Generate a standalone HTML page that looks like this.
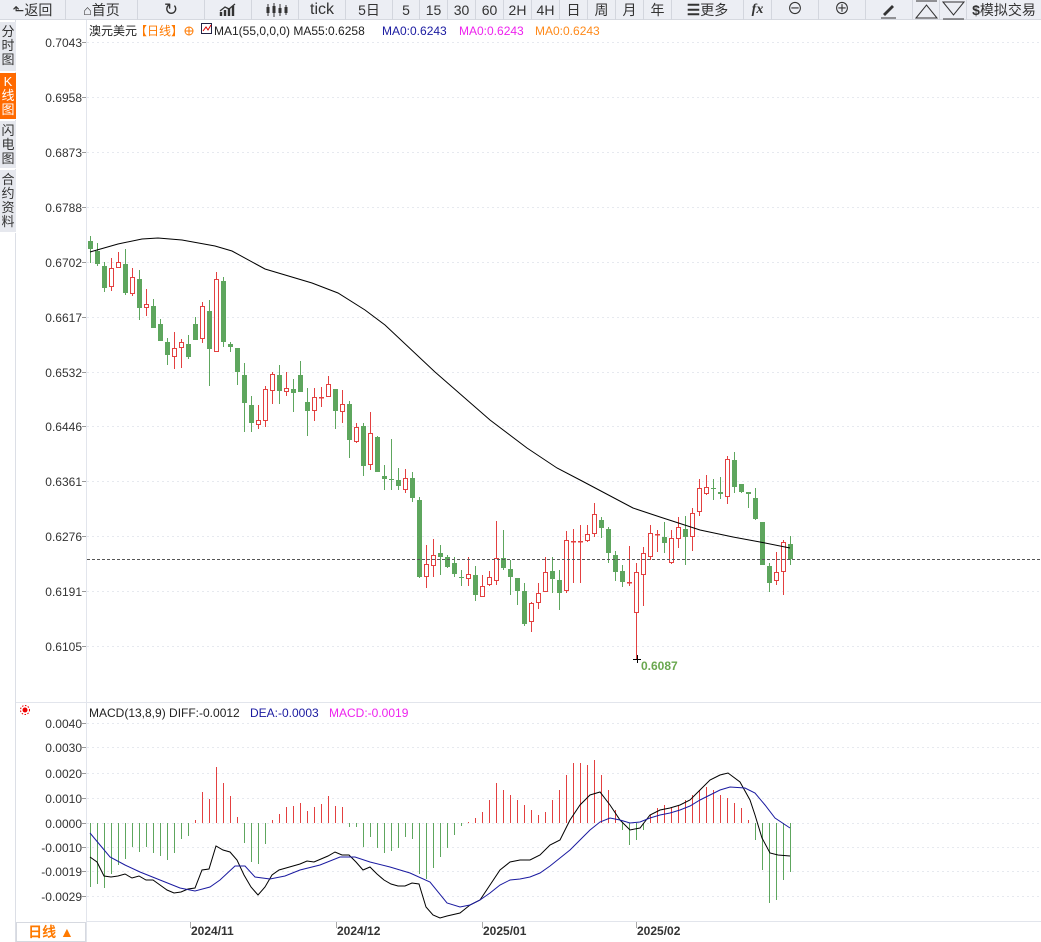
<!DOCTYPE html>
<html><head><meta charset="utf-8"><style>
*{margin:0;padding:0;box-sizing:border-box}
body{width:1041px;height:942px;overflow:hidden;background:#fff;font-family:"Liberation Sans","Noto Sans CJK SC",sans-serif;position:relative}
#tb{position:absolute;left:0;top:0;width:1041px;height:20px;background:#eceef4;border-bottom:1px solid #d6d9e0}
#tb div{position:absolute;top:0;height:20px;border-right:1px solid #d3d6de;font-size:14px;line-height:20px;text-align:center;color:#333}
#side{position:absolute;left:0;top:20px;width:16px;height:922px;background:#fff;border-right:1px solid #dcdfe6}
#side div{position:absolute;left:0;width:16px;background:#e6e8ee;font-size:13px;line-height:14px;text-align:center;color:#333;border-bottom:1px solid #fff}
svg{position:absolute;left:0;top:0}
</style></head><body>
<div id="tb">
<div style="left:0;width:66px">&#x2B11;返回</div>
<div style="left:66px;width:72px">&#x2302;首页</div>
<div style="left:138px;width:67px;font-size:17px">&#x21BB;</div>
<div style="left:205px;width:47px"><svg width="47" height="20" style="position:static"><path d="M16 16V12M20 16V10M24 16V8M28 16V6" stroke="#333" stroke-width="2.4"/><path d="M15 11L20 7L24 9L30 4" stroke="#333" stroke-width="1.3" fill="none"/></svg></div>
<div style="left:252px;width:47px"><svg width="47" height="20" style="position:static"><path d="M16 4V16M22 3V17M28 4V16M34 5V15" stroke="#333" stroke-width="1"/><rect x="14.5" y="7" width="3" height="6" fill="#333"/><rect x="20.5" y="6" width="3" height="7" fill="#333"/><rect x="26.5" y="8" width="3" height="5" fill="#333"/><rect x="32.5" y="7" width="3" height="6" fill="#333"/></svg></div>
<div style="left:299px;width:47px;font-size:16px">tick</div>
<div style="left:346px;width:47px">5日</div>
<div style="left:393px;width:27px">5</div>
<div style="left:420px;width:28px">15</div>
<div style="left:448px;width:28px">30</div>
<div style="left:476px;width:28px">60</div>
<div style="left:504px;width:28px">2H</div>
<div style="left:532px;width:28px">4H</div>
<div style="left:560px;width:28px">日</div>
<div style="left:588px;width:28px">周</div>
<div style="left:616px;width:28px">月</div>
<div style="left:644px;width:28px">年</div>
<div style="left:672px;width:72px"><b style="font-size:15px">&#x2630;</b>更多</div>
<div style="left:744px;width:28px;font-style:italic;font-weight:bold;font-family:'Liberation Serif',serif">fx</div>
<div style="left:772px;width:47px;font-size:16px">&#x2296;</div>
<div style="left:819px;width:47px;font-size:16px">&#x2295;</div>
<div style="left:866px;width:47px"><svg width="47" height="20" style="position:static"><path d="M17 14L26 5L28 7L19 16Z" fill="#333"/><path d="M15 18H30" stroke="#333"/></svg></div>
<div style="left:913px;width:27px"><svg width="27" height="20" style="position:static"><path d="M3 1H24M3 18L13.5 5L24 18Z" stroke="#333" fill="none"/></svg></div>
<div style="left:940px;width:27px"><svg width="27" height="20" style="position:static"><path d="M3 19H24M3 2L13.5 15L24 2Z" stroke="#333" fill="none"/></svg></div>
<div style="left:967px;width:74px;border-right:none"><b>$</b>模拟交易</div>
</div>
<div id="side">
<div style="top:2px;height:50px;padding-top:3px">分<br>时<br>图</div>
<div style="top:53px;height:47px;background:#ff6a00;color:#fff;padding-top:2px">K<br>线<br>图</div>
<div style="top:101px;height:48px;padding-top:3px">闪<br>电<br>图</div>
<div style="top:150px;height:63px;padding-top:3px">合<br>约<br>资<br>料</div>
</div>
<svg id="c" width="1041" height="942"></svg>
<div style="position:absolute;left:16px;top:922px;width:70px;height:20px;border:1px solid #d6d9e0;background:#fff;color:#ff7a00;font-size:14px;font-weight:bold;line-height:18px;text-align:center">日线 ▲</div>
<script>
var s='';
function T(x,y,t,c,a,sz,w){s+='<text x="'+x+'" y="'+y+'" fill="'+(c||'#333')+'" font-size="'+(sz||12)+'" text-anchor="'+(a||'start')+'"'+(w?' font-weight="bold"':'')+' font-family="Liberation Sans,Noto Sans CJK SC,sans-serif">'+t+'</text>';}
// frame lines
s+='<line x1="86.5" y1="20" x2="86.5" y2="942" stroke="#e2e5ec"/>';
s+='<line x1="16" y1="702.5" x2="1041" y2="702.5" stroke="#e2e5ec"/>';
s+='<line x1="86" y1="921.5" x2="1041" y2="921.5" stroke="#e2e5ec"/>';
var pl=[['0.7043',42],['0.6958',97],['0.6873',152],['0.6788',207],['0.6702',262],['0.6617',317],['0.6532',372],['0.6446',426],['0.6361',481],['0.6276',536],['0.6191',591],['0.6105',646]];
pl.forEach(function(p){s+='<line x1="87" y1="'+(p[1]+.5)+'" x2="1041" y2="'+(p[1]+.5)+'" stroke="#e6e9ef" stroke-dasharray="2,3"/>';s+='<line x1="82" y1="'+(p[1]+.5)+'" x2="86" y2="'+(p[1]+.5)+'" stroke="#999"/>';T(82,p[1]+5,p[0],'#333','end',12);});
var ml=[['0.0040',723],['0.0030',747],['0.0020',773],['0.0010',798],['0.0000',823],['-0.0010',847],['-0.0019',871],['-0.0029',896]];
ml.forEach(function(p){s+='<line x1="87" y1="'+(p[1]+.5)+'" x2="1041" y2="'+(p[1]+.5)+'" stroke="#e6e9ef" stroke-dasharray="2,3"/>';s+='<line x1="82" y1="'+(p[1]+.5)+'" x2="86" y2="'+(p[1]+.5)+'" stroke="#999"/>';T(82,p[1]+5,p[0],'#333','end',12);});
// candles: [bodyTop,bodyBot,wickTop,wickBot,red?]
var C=[[241,249,236,263,0],[251,264,243,266,0],[266,288,262,292,0],[268,287,258,291,1],[262,268,252,268,1],[264,293,249,295,0],[277,294,268,296,1],[279,308,270,320,0],[304,308,289,316,1],[306,328,299,328,0],[324,341,319,341,0],[342,355,338,365,0],[348,357,332,369,1],[342,348,339,368,1],[344,357,335,359,0],[324,340,317,340,0],[306,339,302,343,1],[311,349,300,386,0],[279,352,272,352,1],[281,342,277,347,0],[344,347,342,352,0],[348,372,348,385,0],[375,403,363,432,0],[405,423,396,432,0],[420,425,405,429,1],[389,421,386,427,1],[374,391,372,404,1],[375,391,365,404,0],[388,392,372,396,1],[389,393,379,412,0],[375,392,361,392,0],[402,411,388,436,0],[397,411,388,421,1],[397,398,387,407,1],[384,397,376,397,1],[389,411,389,429,0],[404,412,390,423,1],[404,440,401,458,0],[427,442,423,443,1],[426,466,423,476,0],[433,465,412,470,1],[437,472,436,472,0],[476,479,465,490,0],[479,480,439,490,0],[480,486,468,490,0],[478,490,469,493,1],[478,498,472,502,0],
[500,577,497,578,0],[564,577,545,588,1],[555,566,539,577,1],[553,557,545,575,0],[557,567,555,568,0],[563,574,557,577,0],[577,578,570,586,0],[574,579,557,586,1],[575,595,566,601,0],[586,597,575,597,1],[577,585,571,586,1],[558,581,521,585,1],[558,568,530,570,0],[569,577,560,595,0],[578,591,578,605,0],[591,624,583,626,0],[603,622,602,632,1],[593,603,583,609,1],[572,592,557,592,1],[571,579,557,593,0],[580,593,570,610,0],[540,591,531,593,1],[541,542,529,583,1],[541,542,525,583,1],[534,541,525,542,1],[514,534,503,537,1],[520,528,517,538,0],[529,553,527,563,0],[555,572,551,581,0],[571,582,565,587,0],[582,583,546,586,1],[572,613,563,659,1],[553,575,547,606,1],[533,557,525,560,1],[534,535,530,552,1],[537,543,522,553,0],[538,563,530,564,1],[527,539,517,548,1],[529,537,516,565,0],[513,537,508,551,1],[488,512,479,516,1],[487,494,475,495,1],[488,489,479,500,0],[492,494,477,499,0],[459,497,456,504,1],[460,487,452,493,0],[484,492,484,493,0],[492,494,492,508,0],[498,519,488,520,0],[522,565,522,565,0],[566,583,563,592,0],[572,581,552,585,1],[542,572,540,595,1],[544,559,536,565,0]];
var G='#5ea65e',R='#e34040';
C.forEach(function(c,i){var x=90+7*i,col=c[4]?R:G;
s+='<line x1="'+(x+.5)+'" y1="'+c[2]+'" x2="'+(x+.5)+'" y2="'+c[3]+'" stroke="'+col+'"/>';
var h=Math.max(1,c[1]-c[0]);
if(c[4])s+='<rect x="'+(x-1.5)+'" y="'+(c[0]+.5)+'" width="4" height="'+(h-1>0?h-1:0.5)+'" fill="#fff" stroke="'+R+'"/>';
else s+='<rect x="'+(x-2)+'" y="'+c[0]+'" width="5" height="'+h+'" fill="'+G+'"/>';});
function P(a,col){s+='<polyline fill="none" stroke="'+col+'" stroke-width="1" points="'+a.map(function(p){return p.join(',')}).join(' ')+'"/>';}
P([[90,252],[118,244],[142,239],[158,238],[182,240],[215,246],[232,251],[265,269],[312,283],[338,293],[365,310],[385,325],[435,372],[490,420],[527,448],[557,468],[582,481],[633,508],[660,517],[700,530],[733,537],[760,542],[790,548]],'#000');
s+='<line x1="87" y1="559.5" x2="1041" y2="559.5" stroke="#555" stroke-dasharray="3,2"/>';
s+='<line x1="633" y1="659.5" x2="641" y2="659.5" stroke="#000"/><line x1="637.5" y1="655" x2="637.5" y2="663" stroke="#000"/>';
T(641,670,'0.6087','#6aa84f','start',12,1);
// header
T(89,35,'澳元美元','#222','start',12);
T(135,35,'【日线】','#ff7a00','start',12);
s+='<circle cx="189" cy="31" r="4" fill="none" stroke="#ff7a00"/><path d="M185 31H193M189 27V35" stroke="#ff7a00"/>';
s+='<rect x="201.5" y="23.5" width="10" height="10" fill="#fff" stroke="#224"/><path d="M203 31L206 27L208 30L211 25" stroke="#d00" fill="none"/>';
T(214,35,'MA1(55,0,0,0)  MA55:0.6258','#222','start',12);
T(382,35,'MA0:0.6243','#1a1aa0','start',12);
T(459,35,'MA0:0.6243','#ee22ee','start',12);
T(535,35,'MA0:0.6243','#ff8a1a','start',12);
// MACD header
s+='<circle cx="25" cy="710" r="2.5" fill="#e00"/><circle cx="25" cy="710" r="4.5" fill="none" stroke="#e00" stroke-dasharray="1.5,1.5"/>';
T(89,717,'MACD(13,8,9) DIFF:-0.0012','#222','start',12);
T(250,717,'DEA:-0.0003','#1a1aa0','start',12);
T(329,717,'MACD:-0.0019','#ee22ee','start',12);
// histogram
var H=[887,884,888,874,865,859,847,852,847,853,856,860,853,839,836,820,792,799,767,783,796,817,843,862,864,844,820,814,807,806,803,811,807,804,796,806,807,827,827,847,837,848,853,851,848,837,839,874,879,868,857,848,835,826,822,818,812,800,783,790,795,800,805,810,815,812,800,790,775,763,763,765,760,775,790,810,830,845,840,830,815,808,805,808,806,800,795,790,787,790,795,798,803,808,820,840,870,903,900,880,872];
H.forEach(function(y,i){var x=90+7*i+.5;s+='<line x1="'+x+'" y1="823" x2="'+x+'" y2="'+y+'" stroke="'+(y<823?R:G)+'"/>';});
P([[90,857],[97,862],[104,876],[111,877],[118,876],[125,874],[132,878],[139,876],[146,880],[153,880],[160,885],[167,890],[174,893],[181,892],[188,889],[195,888],[202,870],[209,869],[216,846],[223,850],[230,852],[237,860],[244,875],[251,887],[258,895],[265,887],[272,875],[279,870],[286,868],[293,866],[300,864],[307,861],[314,862],[321,859],[328,856],[335,852],[342,855],[349,855],[356,862],[363,870],[370,867],[377,874],[384,880],[391,884],[398,886],[405,886],[412,883],[419,884],[426,907],[433,915],[440,918],[447,916],[460,913],[470,905],[480,900],[490,885],[500,870],[510,862],[520,860],[530,860],[540,855],[550,845],[560,840],[570,820],[580,805],[590,795],[600,792],[610,805],[620,820],[630,830],[640,828],[650,815],[660,810],[670,808],[680,805],[690,800],[700,790],[710,780],[720,775],[728,773],[740,782],[750,800],[755,815],[762,838],[770,853],[778,855],[790,856]],'#000');
P([[90,833],[100,845],[110,857],[125,865],[140,872],[160,880],[180,888],[195,891],[210,887],[220,880],[235,866],[245,866],[255,877],[270,879],[285,876],[300,870],[320,865],[340,857],[355,857],[370,862],[390,867],[410,873],[430,882],[447,903],[460,907],[470,905],[480,900],[490,893],[500,885],[510,880],[520,879],[530,877],[540,873],[550,866],[560,858],[570,850],[580,840],[590,830],[600,822],[610,818],[620,820],[630,823],[640,822],[650,818],[660,815],[670,813],[680,810],[690,806],[700,800],[710,795],[720,790],[730,787],[745,788],[755,793],[765,805],[775,818],[790,828]],'#1a1aa0');
// dates
[[190,'2024/11'],[336,'2024/12'],[482,'2025/01'],[636,'2025/02']].forEach(function(d){s+='<line x1="'+(d[0]+.5)+'" y1="922" x2="'+(d[0]+.5)+'" y2="928" stroke="#aaa"/>';T(d[0]+1,935,d[1],'#333','start',12,1);});
document.getElementById('c').innerHTML=s;
</script>
</body></html>
